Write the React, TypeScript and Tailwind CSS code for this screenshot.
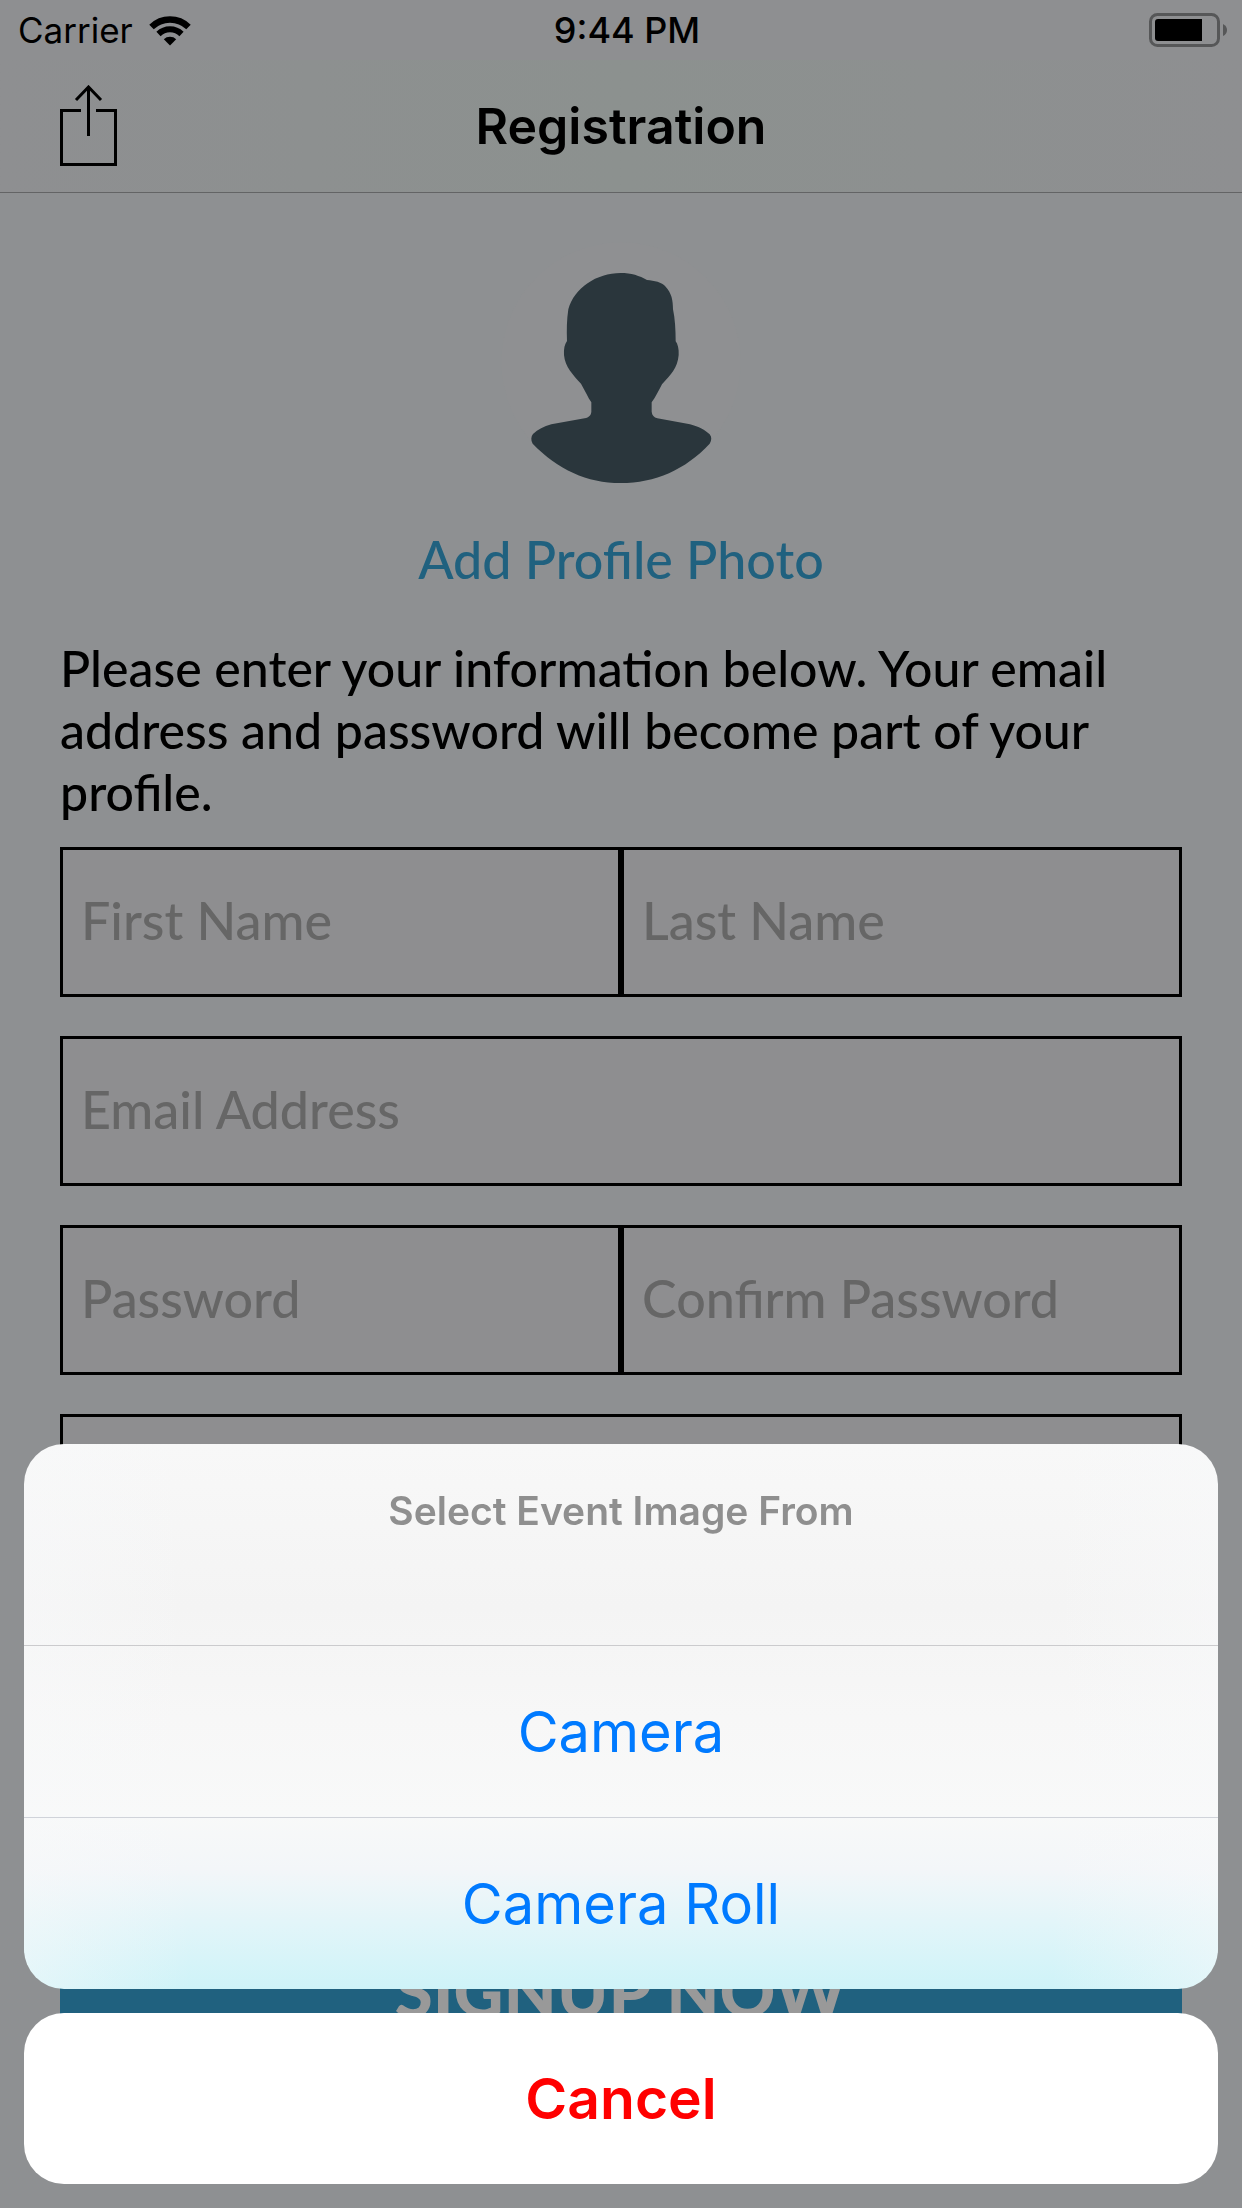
import React from "react";

function WifiIcon() {
  return (
    <svg viewBox="0 0 42 31" className="h-[31px] w-[42px]" aria-hidden="true">
      <g fill="none" stroke="#000">
        <path d="M2.5 12 A26.5 26.5 0 0 1 39.5 12" strokeWidth="6.4" />
        <path d="M9.5 19 A16.5 16.5 0 0 1 32.5 19" strokeWidth="6" />
      </g>
      <path d="M21 30.5 L14.8 24.2 A9 9 0 0 1 27.2 24.2 Z" fill="#000" />
    </svg>
  );
}

function BatteryIcon() {
  return (
    <svg viewBox="0 0 79 34" className="h-[34px] w-[79px]" role="img" aria-label="Battery">
      <rect x="1.5" y="1.5" width="68" height="31" rx="7" fill="none" stroke="#565758" strokeWidth="3" />
      <path d="M9 6 H53 V28 H9 Q6 28 6 25 V9 Q6 6 9 6 Z" fill="#000" />
      <path d="M74 11 Q78 13 78 17 Q78 21 74 23 Z" fill="#565758" />
    </svg>
  );
}

function ShareIcon() {
  return (
    <svg viewBox="0 0 58 82" className="h-[82px] w-[58px]" fill="none" stroke="#000" aria-hidden="true">
      <path d="M21 25.5 H1.5 V79.5 H55.5 V25.5 H36" strokeWidth="3" />
      <path d="M28.5 51 V3 M16 15 L28.5 2 L41 15" strokeWidth="3" />
    </svg>
  );
}

function Avatar() {
  return (
    <svg viewBox="62 6 720 720" className="h-60 w-60 overflow-visible" aria-hidden="true">
      <circle cx="422" cy="366" r="359" fill="#8f9092" />
      <path
        fill="#2a363c"
        d="M421 99 C452 99 478 107 500 120 C522 122 544 126 556 140 C574 160 578 180 578 208 C584 236 586 270 586 304 C592 312 596 326 595 345 C592 384 571 404 545 433 C534 453 526 471 514 487 V515 C515 526 521 532 531 535 L629 553 C656 560 674 570 688 583 C695 592 694 601 688 611 C615 689 525 729 421 729 C320 729 232 688 157 611 C151 600 152 590 158 582 C173 569 190 559 213 553 L313 535 C326 532 332 526 333 515 V487 C323 472 314 452 302 431 C278 405 254 380 251 345 C250 326 253 313 260 303 C259 270 259 240 264 208 C281 144 349 99 421 99 Z"
      />
    </svg>
  );
}

type FieldProps = { label: string; hint?: string; type?: string };

function Field({ label, hint = label, type = "text" }: FieldProps) {
  return (
    <input
      type={type}
      aria-label={label}
      placeholder={hint}
      className="h-[150px] min-w-0 flex-1 border-3 border-black bg-[#8e8e90] px-[18px] pb-1 text-[52px] font-medium text-black outline-none placeholder:text-[#666666] placeholder:opacity-100"
    />
  );
}

export default function App() {
  return (
    <div className="min-h-screen bg-[#8e9092] font-['Lato','Open_Sans',sans-serif] text-black">
      <header className="border-b border-[#636465] bg-[#8e8f91] font-['Inter',sans-serif]">
        <div className="grid h-[60px] grid-cols-[1fr_auto_1fr] items-center pr-[14px] pl-[18px]">
          <div className="flex items-center gap-4 text-[35px]">
            <span>Carrier</span>
            <WifiIcon />
          </div>
          <time className="ml-2 text-[36px] font-medium">9:44 PM</time>
          <div className="flex justify-end">
            <BatteryIcon />
          </div>
        </div>
        <div className="grid h-[132px] grid-cols-[1fr_auto_1fr] items-center bg-linear-to-r from-[#8e8f91] via-[#8c918f] to-[#8e8f91] px-[60px]">
          <button type="button" aria-label="Share" className="justify-self-start">
            <ShareIcon />
          </button>
          <h1 className="text-[50px] font-semibold">Registration</h1>
          <span />
        </div>
      </header>

      <main className="px-[60px] pt-[49px]">
        <div className="flex flex-col items-center gap-[44px]">
          <Avatar />
          <button type="button" className="text-[52px] leading-[66px] font-medium text-[#20617f]">
            Add Profile Photo
          </button>
        </div>
        <p className="mt-[45px] text-[50px] leading-[62px] font-medium">
          Please enter your information below. Your email address and password will become part of your profile.
        </p>
        <form className="mt-6 flex flex-col gap-[39px]" onSubmit={(e) => e.preventDefault()}>
          <div className="flex">
            <Field label="First Name" />
            <Field label="Last Name" />
          </div>
          <div className="flex">
            <Field label="Email Address" type="email" />
          </div>
          <div className="flex">
            <Field label="Password" type="password" />
            <Field label="Confirm Password" type="password" />
          </div>
          <div className="flex">
            <Field label="Phone" hint="" type="tel" />
          </div>
          <button type="submit" className="mt-[313px] h-[150px] bg-[#20617f] text-[69px] font-black text-[#999999]">
            SIGNUP NOW
          </button>
        </form>
      </main>

      <div
        role="dialog"
        aria-label="Select Event Image From"
        className="fixed inset-x-6 bottom-6 flex flex-col gap-6 font-['Inter',sans-serif]"
      >
        <div className="overflow-hidden rounded-[40px] bg-[linear-gradient(to_right,#f8f9fa80,#f8f9fa00_14%,#f8f9fa00_86%,#f8f9fa80),linear-gradient(to_bottom,#f8f8f8,#f4f4f4_30%,#f7f7f7_50%,#f8f9f9_68%,#f3f6f9_78%,#e2f5f9_88%,#cef3f8)]">
          <h2 className="h-[201px] pt-[43px] text-center text-[39px] leading-[48px] font-semibold text-[#8f8f8f]">
            Select Event Image From
          </h2>
          <button type="button" className="h-[172px] w-full border-t border-[#cbcbcd] text-[56px] text-[#007aff]">
            Camera
          </button>
          <button type="button" className="h-[172px] w-full border-t border-[#d0d3da] text-[56px] text-[#007aff]">
            Camera Roll
          </button>
        </div>
        <button type="button" className="h-[171px] rounded-[40px] bg-white text-[57px] font-semibold text-[#ff0000]">
          Cancel
        </button>
      </div>
    </div>
  );
}
